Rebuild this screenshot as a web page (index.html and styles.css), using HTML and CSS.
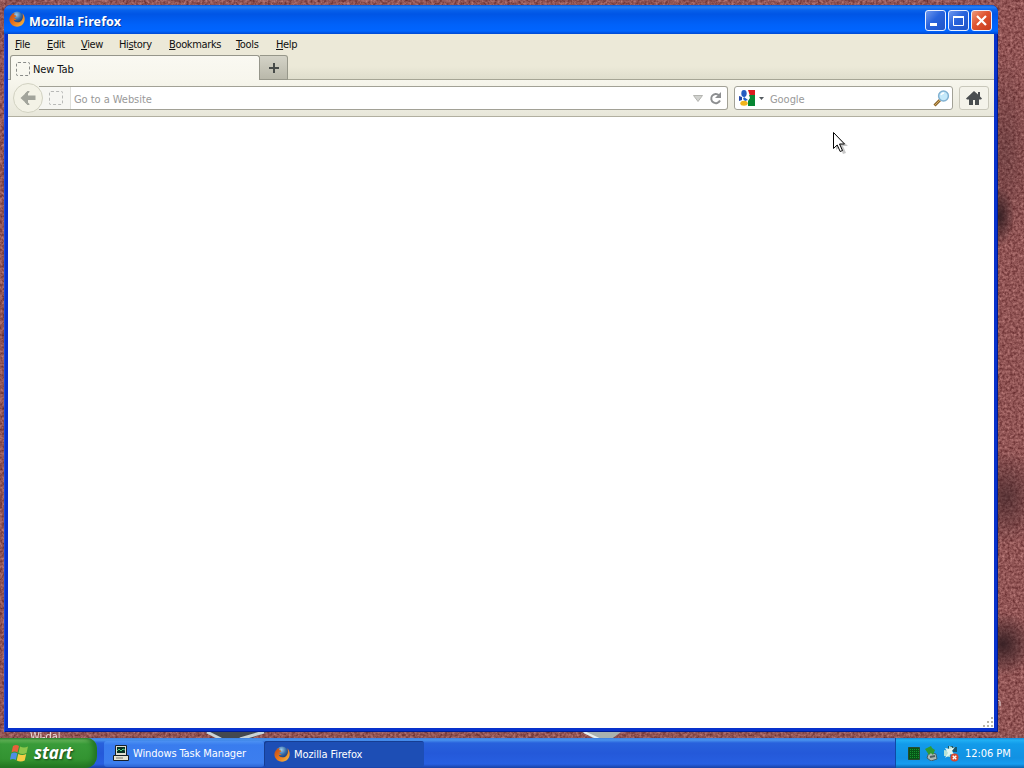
FILE: index.html
```
<!DOCTYPE html>
<html lang="en">
<head>
    <meta charset="UTF-8">
    <title>Mozilla Firefox</title>
    <link rel="stylesheet" href="styles.css">
</head>
<body>
    <svg class="wallpaper" width="1024" height="768" viewBox="0 0 1024 768">
        <defs>
            <filter id="grain" x="0" y="0" width="100%" height="100%" color-interpolation-filters="sRGB">
                <feTurbulence type="fractalNoise" baseFrequency="0.38" numOctaves="3" seed="8"/>
                <feColorMatrix values="0.45 0 0 0 0.34  0.42 0 0 0 0.12  0.4 0 0 0 0.13  0 0 0 0 1"/>
            </filter>
            <radialGradient id="shade">
                <stop offset="0" stop-color="#301c20" stop-opacity=".9"/>
                <stop offset="1" stop-color="#301c20" stop-opacity="0"/>
            </radialGradient>
        </defs>
        <rect width="1024" height="768" filter="url(#grain)"/>
        <ellipse cx="1005" cy="150" rx="28" ry="100" fill="url(#shade)" opacity=".35"/>
        <ellipse cx="1000" cy="216" rx="14" ry="30" fill="url(#shade)"/>
        <ellipse cx="1006" cy="497" rx="35" ry="48" fill="url(#shade)" opacity=".65"/>
        <ellipse cx="1003" cy="644" rx="32" ry="32" fill="url(#shade)"/>
        <path d="M205 732h62l-18 7h-29z" fill="#444950"/>
        <path d="M207 732l14 7M264 732l-24 7" stroke="#c9d2d5" stroke-width="3"/>
        <path d="M582 732h39l-8 6h-20z" fill="#a9b2af"/>
        <path d="M584 732l15 7" stroke="#e9eeee" stroke-width="2"/>
        <text class="icon-label" x="30" y="740">Wi-dal</text>
        <text class="icon-label" x="995" y="706">n</text>
    </svg>

    <svg class="symbols" width="0" height="0">
        <defs>
            <radialGradient id="globe" cx=".45" cy=".25" r=".7">
                <stop offset="0" stop-color="#9ccbea"/>
                <stop offset=".5" stop-color="#386da8"/>
                <stop offset="1" stop-color="#142c68"/>
            </radialGradient>
            <linearGradient id="fox" x1="0" y1="0" x2="1" y2="1">
                <stop offset="0" stop-color="#b9441a"/>
                <stop offset=".5" stop-color="#e8761d"/>
                <stop offset="1" stop-color="#f8c445"/>
            </linearGradient>
        </defs>
        <symbol id="firefox" viewBox="0 0 16 16">
            <circle cx="8" cy="7" r="6.5" fill="url(#globe)"/>
            <path d="M2.500 1.500L3 3.200C.8 5 0 7.500.6 10c.9 3.500 4 5.700 7.400 5.700 4.500 0 7.700-3.400 7.700-7.700 0-2.500-.9-4.500-2.500-5.800.9 1.800 1 3.600.4 5.200-.9 2.700-3 4-5.300 3.900-2-.1-3.200-1.100-3.700-2.500 1 .5 2.200.4 3-.4-1.500 0-2.300-.8-2.300-1.800l2-1-.4-1.200-2-.3.8-1.800c-1.300-.1-2 .3-2.500.8z" fill="url(#fox)"/>
        </symbol>
    </svg>

    <div class="desktop">
        <main class="window">
            <header class="titlebar">
                <svg class="app-icon" width="16" height="16"><use href="#firefox"/></svg>
                <h1>Mozilla Firefox</h1>
                <div class="controls">
                    <button class="control">
                        <svg width="21" height="21"><rect x="5" y="13" width="7" height="3" fill="#fff"/></svg>
                    </button>
                    <button class="control">
                        <svg width="21" height="21"><path d="M5.500 6.500h10v9h-10z" fill="none" stroke="#fff"/><path d="M5 6h11v2H5z" fill="#fff"/></svg>
                    </button>
                    <button class="control close">
                        <svg width="21" height="21"><path d="M6 6l9 9M15 6l-9 9" stroke="#fff" stroke-width="2.200"/></svg>
                    </button>
                </div>
            </header>
            <nav class="menubar">
                <span><u>F</u>ile</span>
                <span><u>E</u>dit</span>
                <span><u>V</u>iew</span>
                <span>Hi<u>s</u>tory</span>
                <span><u>B</u>ookmarks</span>
                <span><u>T</u>ools</span>
                <span><u>H</u>elp</span>
            </nav>
            <div class="tabs">
                <div class="tab">
                    <i class="blank-icon"></i>
                    <span>New Tab</span>
                </div>
                <div class="new-tab">
                    <svg width="10" height="10"><path d="M5 0v10M0 5h10" stroke="#474b49" stroke-width="2"/></svg>
                </div>
            </div>
            <div class="toolbar">
                <div class="back">
                    <svg width="16" height="14"><path d="M8 0v4.500h7.500v4.500H8V14L.5 7z" fill="#a2a49b"/><path d="M9 0L5.500 3.500M9 14L5.500 10.500" stroke="#a2a49b" stroke-width="2"/></svg>
                </div>
                <div class="urlbar">
                    <div class="identity"><i class="blank-icon"></i></div>
                    <span class="hint">Go to a Website</span>
                    <svg class="dropmarker" width="10" height="7"><path d="M.5.500h9L5 6.500z" fill="#d0d1ce" stroke="#b4b5b1"/></svg>
                    <svg class="reload" width="13" height="13"><path d="M10 3.200A4.600 4.600 0 1 0 11 8.500" fill="none" stroke="#8d8f91" stroke-width="2"/><path d="M12 0v6H6z" fill="#8d8f91"/></svg>
                </div>
                <div class="search">
                    <svg class="google" width="16" height="16">
                        <path d="M0 0h16v16H0z" fill="#fff"/>
                        <path d="M9 0h7v5l-5 1z" fill="#d91b20"/>
                        <path d="M16 5v11H9v-5l2-3-1-3z" fill="#078633"/>
                        <path d="M0 6l3 1v3l-3 1z" fill="#2448a9"/>
                        <ellipse cx="5" cy="3.500" rx="2.700" ry="3.400" fill="#255cc1"/>
                        <path d="M5 7l4 3-3 1-2-2z" fill="#2360c5"/>
                        <ellipse cx="5" cy="13.200" rx="3.700" ry="2.500" fill="#f1b51c"/>
                    </svg>
                    <svg class="engine-arrow" width="5" height="3"><path d="M0 0h5L2.500 3z" fill="#555b60"/></svg>
                    <span class="hint">Google</span>
                    <svg class="lens" width="17" height="17"><path d="M7 10l-5.500 5.500" stroke="#8b6731" stroke-width="3"/><path d="M7 10l-5.500 5.500" stroke="#d4aa58"/><circle cx="10.500" cy="6" r="4.900" fill="#c5e9fa" stroke="#81b1d1" stroke-width="1.500"/><path d="M8 5q1-2 3-2" fill="none" stroke="#fff" stroke-width="1.500"/></svg>
                </div>
                <div class="home">
                    <svg width="16" height="14"><path d="M8 0L0 7.500l1 1h2V14h4V9h2v5h4V8.500h2l1-1-2-2V1h-2v2.500z" fill="#4a4e50"/></svg>
                </div>
            </div>
            <section class="content">
                <svg width="12" height="12" fill="#b8b5a8"><path d="M9 1h2v2H9zM5 5h2v2H5zM9 5h2v2H9zM1 9h2v2H1zM5 9h2v2H5zM9 9h2v2H9z"/></svg>
            </section>
        </main>

        <footer class="taskbar">
            <button class="start">
                <svg width="19" height="18">
                    <path d="M3 2q3-2 6 0L7.500 8.500q-3-2-6 0z" fill="#e8613b"/>
                    <path d="M10 2.500q4 2 8 0l-1.500 6.500q-4 2-8 0z" fill="#8cc64b"/>
                    <path d="M1.300 9.500q3-2 6 0L5.800 16q-3-2-6 0z" fill="#4e8ee5"/>
                    <path d="M8.200 10q4 2 8 0l-1.500 6.500q-4 2-8 0z" fill="#f5cd45"/>
                </svg>
                <span>start</span>
            </button>
            <div class="task">
                <svg width="16" height="16">
                    <path d="M2.500.5h11v10h-11z" fill="#dddcd0" stroke="#17202a"/>
                    <path d="M4 2h8v6H4z" fill="#073023"/>
                    <path d="M4 6l2-2 2 2 2-2 2 1" fill="none" stroke="#55cc85"/>
                    <path d="M.5 10.500h15v5H.5z" fill="#e5e3d5" stroke="#17202a"/>
                    <path d="M3 13h7" stroke="#77776e"/>
                </svg>
                <span>Windows Task Manager</span>
            </div>
            <div class="task active">
                <svg width="16" height="16"><use href="#firefox"/></svg>
                <span>Mozilla Firefox</span>
            </div>
            <div class="tray">
                <svg width="12" height="13"><path d="M.5.500h11v12H.5z" fill="#075516" stroke="#284b2e"/><path d="M2 2.500h9M2 4.500h9M2 6.500h9M2 8.500h9M2 10.500h9" stroke="#16902d" stroke-dasharray="1 1"/></svg>
                <svg width="13" height="15"><path d="M4 6l7 2 1 5-6 2-4-3z" fill="#aeb9b4" stroke="#41606c"/><path d="M5 11l5-1" stroke="#4d5d60" stroke-width="2"/><path d="M0 3l6-3 1 2 3 2-2 5-2-2-2 2z" fill="#2f9a35"/></svg>
                <svg width="16" height="17"><path d="M5 1h5v5H5zM10 2h4v5h-4z" fill="#18566c"/><path d="M6 1l3 1v4L6 5zM1 5l6 1v6l-6-1z" fill="#b6e1d5"/><path d="M2 3l3 5-3 5 6-4 4 2-3-5 3-4-5 2z" fill="#e2f6f0"/><circle cx="11.500" cy="12.500" r="4" fill="#d7472e"/><path d="M9.700 10.700l3.600 3.600M13.300 10.700l-3.600 3.600" stroke="#fff" stroke-width="1.300"/></svg>
                <span class="clock">12:06 PM</span>
            </div>
        </footer>
    </div>

    <svg class="cursor" width="16" height="24">
        <path d="M3 3v15l4-3 3 7 3-1-3-7h5z" fill="#000" opacity=".22"/>
        <path d="M.5.500v16l3.700-3.500 3 6.500 2.300-1-3-6.500h5z" fill="#fff" stroke="#000"/>
    </svg>
</body>
</html>
```
FILE: styles.css
```
* {
    box-sizing: border-box;
}
body {
    margin: 0;
    overflow: hidden;
    background: #88484a;
    color: #111;
    font-family: Tahoma, "DejaVu Sans Condensed", "DejaVu Sans", sans-serif;
    font-size: 11px;
    font-stretch: condensed;
    letter-spacing: -0.1px;
    white-space: nowrap;
}
svg {
    display: block;
    flex-shrink: 0;
}
button {
    padding: 0;
    font: inherit;
}
.wallpaper {
    position: absolute;
    z-index: -1;
}
.symbols {
    position: absolute;
}
.icon-label {
    fill: #fff;
    font-size: 11px;
    opacity: .8;
}
.desktop {
    height: 768px;
    padding-top: 5px;
    display: flex;
    flex-direction: column;
    justify-content: space-between;
}

/* window */
.window {
    width: 994px;
    height: 727px;
    margin-left: 4px;
    padding: 0 4px 4px;
    display: flex;
    flex-direction: column;
    border-radius: 7px 7px 0 0;
    background: #0831cc;
    box-shadow: inset 1px 0 #1648e2, inset -1px -1px #001c91;
    overflow: hidden;
}
.titlebar {
    height: 29px;
    margin: 0 -4px;
    padding: 1px 6px 0 5px;
    display: flex;
    align-items: center;
    background: linear-gradient(#0758d6 0, #2681f7 2px, #0862eb 5px, #0055e5 9px, #0062fa 20px, #0065ff 26px, #0048d1 29px);
}
.app-icon {
    margin-top: -2px;
}
.titlebar h1 {
    margin: 3px 0 0 4px;
    flex: 1;
    color: #fff;
    font-family: "Noto Sans", sans-serif;
    font-stretch: normal;
    font-size: 12.5px;
    letter-spacing: 0.1px;
    text-shadow: 1px 1px #073b9c;
}
.controls {
    display: flex;
    gap: 2px;
}
.control {
    width: 21px;
    height: 21px;
    border: 1px solid #e8efff;
    border-radius: 3px;
    background: linear-gradient(135deg, #7199ee, #2863dc 45%, #2054c7);
}
.control svg {
    margin: -1px;
}
.close {
    background: linear-gradient(135deg, #ed9a7c, #df5430 45%, #c53b1e);
}
.menubar {
    height: 21px;
    padding-left: 7px;
    display: grid;
    grid-template-columns: 32px 34px 38px 50px 67px 40px 40px;
    align-items: center;
    background: #ece9d8;
    letter-spacing: -0.35px;
}
.menubar u {
    text-underline-offset: 1px;
    text-decoration-skip-ink: none;
}
.tabs {
    height: 25px;
    padding-left: 2px;
    display: flex;
    background: linear-gradient(#ece9d8 45%, #deddcc);
    box-shadow: inset 0 -1px #a6a595;
}
.tab {
    width: 250px;
    padding: 2px 5px 0;
    display: flex;
    align-items: center;
    gap: 3px;
    border: 1px solid #96968b;
    border-bottom: 0;
    border-radius: 3px 3px 0 0;
    background: linear-gradient(#faf9f2, #f7f6ed);
}
.blank-icon {
    width: 14px;
    height: 14px;
    border: 1px dashed #8a8c89;
    border-radius: 2px;
}
.new-tab {
    width: 28px;
    display: grid;
    place-items: center;
    border: 1px solid #97978a;
    border-left: 0;
    border-radius: 0 3px 0 0;
    background: linear-gradient(#d4d3c7, #b9b8aa);
}
.toolbar {
    height: 37px;
    padding: 0 5px;
    display: flex;
    align-items: center;
    background: linear-gradient(#f7f6ed, #e8e7da);
    border-bottom: 1px solid #b1afa0;
}
.back {
    width: 30px;
    height: 30px;
    display: grid;
    place-items: center;
    flex-shrink: 0;
    border: 1px solid #d2d2c2;
    border-radius: 50%;
    background: #f3f2e6;
    z-index: 1;
}
.urlbar,
.search {
    height: 24px;
    display: flex;
    align-items: center;
    border: 1px solid #a2a196;
    border-radius: 3px;
    background: #fff;
}
.urlbar {
    width: 689px;
    margin-left: -4px;
    padding-right: 5px;
    border-left: 0;
    border-radius: 0 3px 3px 0;
}
.identity {
    width: 32px;
    height: 100%;
    padding-left: 10px;
    display: flex;
    align-items: center;
    border-right: 1px solid #dedfda;
    background: #f6f6f2;
}
.identity .blank-icon {
    border-color: #b8b9b7;
}
.hint {
    color: #999;
    flex: 1;
    padding: 2px 0 0 3px;
    letter-spacing: -0.05px;
}
.reload {
    margin-left: 6px;
}
.search {
    width: 219px;
    margin-left: 6px;
    padding: 0 2px 0 4px;
}
.engine-arrow {
    margin: 0 3px 0 4px;
}
.home {
    width: 30px;
    height: 24px;
    margin-left: 6px;
    display: grid;
    place-items: center;
    border: 1px solid #c9c8bb;
    border-radius: 3px;
    background: #f4f3ea;
}
.content {
    flex: 1;
    display: flex;
    align-items: flex-end;
    justify-content: flex-end;
    background: #fff;
}

/* taskbar */
.taskbar {
    height: 30px;
    display: flex;
    color: #fff;
    background: linear-gradient(#3e80df 0, #4993ee 2px, #2861dc 5px, #2459d9 15px, #275fe1 26px, #1941a5 30px);
}
.start {
    width: 97px;
    padding: 0 0 1px 10px;
    display: flex;
    align-items: center;
    gap: 5px;
    color: #fff;
    border: 0;
    border-radius: 0 10px 12px 0;
    background: linear-gradient(#388c3c 0, #66b65b 2px, #399b39 6px, #339331 21px, #237620 30px);
    box-shadow: inset -4px 0 5px #237524;
}
.start span {
    font-family: "Open Sans", "Noto Sans", sans-serif;
    font-stretch: normal;
    font-size: 17px;
    font-weight: 700;
    font-style: italic;
    letter-spacing: -0.1px;
    text-shadow: 1px 1px 2px #154417;
}
.task {
    width: 160px;
    height: 26px;
    margin: 3px 0 0 7px;
    padding: 0 9px 2px;
    display: flex;
    align-items: center;
    gap: 4px;
    border-radius: 3px;
    background: linear-gradient(#4c91f3, #397cee 4px, #3c7eef 22px, #2c64d3);
}
.active {
    margin-left: 0;
    padding: 0 10px;
    background: #1d4eb5;
    box-shadow: inset 1px 1px #163d92;
}
.tray {
    width: 129px;
    margin-left: auto;
    padding: 0 0 0 12px;
    display: flex;
    align-items: center;
    gap: 5px;
    border-left: 1px solid #0e4aa6;
    background: linear-gradient(#1688d8 0, #20b0f4 2px, #129bea 6px, #1291e3 20px, #159df0 26px, #0b64ae 30px);
}
.clock {
    margin-left: 1px;
    letter-spacing: -0.05px;
}
.cursor {
    position: absolute;
    left: 833px;
    top: 132px;
}
```
